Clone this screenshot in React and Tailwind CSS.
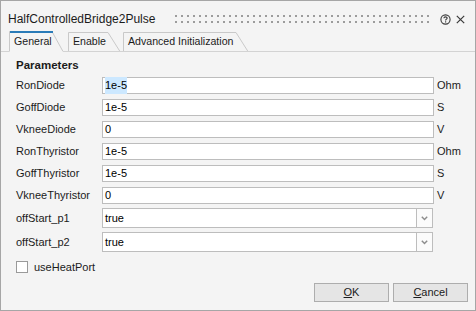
import React from "react";

const fields = [
  { label: "RonDiode", value: "1e-5", unit: "Ohm", selected: true },
  { label: "GoffDiode", value: "1e-5", unit: "S" },
  { label: "VkneeDiode", value: "0", unit: "V" },
  { label: "RonThyristor", value: "1e-5", unit: "Ohm" },
  { label: "GoffThyristor", value: "1e-5", unit: "S" },
  { label: "VkneeThyristor", value: "0", unit: "V" },
];

const combos = [
  { label: "offStart_p1", value: "true" },
  { label: "offStart_p2", value: "true" },
];

// tab outline is drawn, the label stays real text
function Tab({ label, width, slantTop, slantBottom, active, className }) {
  const top = active ? 0.5 : 1.5;
  return (
    <div className={`relative h-[21px] flex items-center pl-[5px] shrink-0 ${className}`}>
      <svg
        className="absolute inset-0 pointer-events-none"
        width={width}
        height="21"
        viewBox={`0 0 ${width} 21`}
      >
        <path
          d={`M0.5 20.5 V${top} H${slantTop} L${slantBottom} 20.5`}
          fill="none"
          stroke="#c9c9c9"
          strokeWidth="1"
        />
        {active ? (
          <>
            <path d={`M${slantBottom} 20.5 H${width}`} stroke="#d3d3d3" strokeWidth="1" />
            <rect x="1" y="0" width={slantTop} height="2" fill="#2a7bb8" />
          </>
        ) : (
          <path d={`M0 20.5 H${width}`} stroke="#d3d3d3" strokeWidth="1" />
        )}
      </svg>
      <span className="relative text-[10.6px] text-[#1b1b1b]">{label}</span>
    </div>
  );
}

function Dots() {
  const row = Array.from({ length: 43 });
  return (
    <div className="flex flex-col gap-[3.5px] ml-auto">
      {[0, 1].map((r) => (
        <div key={r} className="flex gap-[4px]">
          {row.map((_, i) => (
            <span key={i} className="w-[2px] h-[2px] bg-[#9c9c9c]" />
          ))}
        </div>
      ))}
    </div>
  );
}

export default function App() {
  return (
    <div className="w-[476px] h-[311px] border border-[#a6a6a6] bg-[#f4f4f4] flex flex-col font-['Liberation_Sans',Arial,sans-serif] text-[#1b1b1b] overflow-hidden">
      {/* Title bar */}
      <div className="h-[30px] pt-[6px] flex items-center pl-[7px] pr-[10px] shrink-0">
        <span className="text-[12px] text-[#1b1b1b]">HalfControlledBridge2Pulse</span>
        <Dots />
        <svg className="ml-[11px]" width="11" height="11" viewBox="0 0 11 11">
          <circle cx="5.5" cy="5.5" r="4.6" fill="none" stroke="#3a3a3a" strokeWidth="1.1" />
          <path
            d="M3.9 4.3 C3.9 3.3 4.6 2.9 5.5 2.9 C6.4 2.9 7.1 3.4 7.1 4.2 C7.1 5.1 5.6 5.2 5.6 6.4"
            fill="none"
            stroke="#3a3a3a"
            strokeWidth="1.1"
          />
          <rect x="5" y="7.3" width="1.2" height="1.2" fill="#3a3a3a" />
        </svg>
        <svg className="ml-[5px]" width="9" height="9" viewBox="0 0 9 9">
          <path d="M0.8 0.8 L8.2 8.2 M8.2 0.8 L0.8 8.2" stroke="#3a3a3a" strokeWidth="1.2" />
        </svg>
      </div>

      {/* Tabs */}
      <div className="flex h-[21px] shrink-0">
        <div className="w-[8px] border-b border-[#d3d3d3]" />
        <Tab label="General" width={59} slantTop={43} slantBottom={54} active className="w-[59px]" />
        <Tab label="Enable" width={55} slantTop={40} slantBottom={52} className="w-[55px]" />
        <Tab
          label="Advanced Initialization"
          width={127}
          slantTop={113}
          slantBottom={125}
          className="w-[127px]"
        />
        <div className="flex-1 border-b border-[#d3d3d3]" />
      </div>

      {/* Parameters */}
      <div className="flex-1 flex flex-col pl-[15px]">
        <div className="mt-[7px] h-[14px] flex items-center text-[11.5px] font-bold">Parameters</div>

        <div className="mt-[4px] flex flex-col gap-[5px]">
          {fields.map((f) => (
            <div key={f.label} className="flex items-center h-[17px] text-[11px]">
              <span className="w-[86px] shrink-0">{f.label}</span>
              <div className="w-[332px] h-full border border-[#bdbdbd] bg-white flex items-center pl-[2px] text-black">
                <span className={f.selected ? "bg-[#cce8ff]" : ""}>{f.value}</span>
              </div>
              <span className="ml-[3px]">{f.unit}</span>
            </div>
          ))}
        </div>

        <div className="mt-[4px] flex flex-col gap-[4px]">
          {combos.map((c) => (
            <div key={c.label} className="flex items-center h-[20px] text-[11px]">
              <span className="w-[86px] shrink-0">{c.label}</span>
              <div className="w-[331px] h-full flex">
                <div className="flex-1 border border-[#bdbdbd] bg-white flex items-center pl-[2px] text-black">
                  {c.value}
                </div>
                <div className="w-[16px] border border-l-0 border-[#bdbdbd] bg-[#fbfbfb] flex items-center justify-center">
                  <svg width="7" height="5" viewBox="0 0 7 5">
                    <path d="M0.8 0.8 L3.5 3.6 L6.2 0.8" fill="none" stroke="#8c8c8c" strokeWidth="1.4" />
                  </svg>
                </div>
              </div>
            </div>
          ))}
        </div>

        <label className="mt-[9px] flex items-center h-[12px] text-[11px]">
          <span className="w-[12px] h-[12px] border border-[#9a9a9a] bg-white shrink-0" />
          <span className="ml-[6px]">useHeatPort</span>
        </label>

        <div className="mt-auto pb-[8px] pr-[7px] flex justify-end gap-[4px]">
          <button className="w-[75px] h-[19px] border border-[#adadad] bg-[#e5e5e5] text-[11px] text-[#1b1b1b] flex items-center justify-center">
            <span><span className="underline">O</span>K</span>
          </button>
          <button className="w-[75px] h-[19px] border border-[#adadad] bg-[#e5e5e5] text-[11px] text-[#1b1b1b] flex items-center justify-center">
            <span><span className="underline">C</span>ancel</span>
          </button>
        </div>
      </div>
    </div>
  );
}
